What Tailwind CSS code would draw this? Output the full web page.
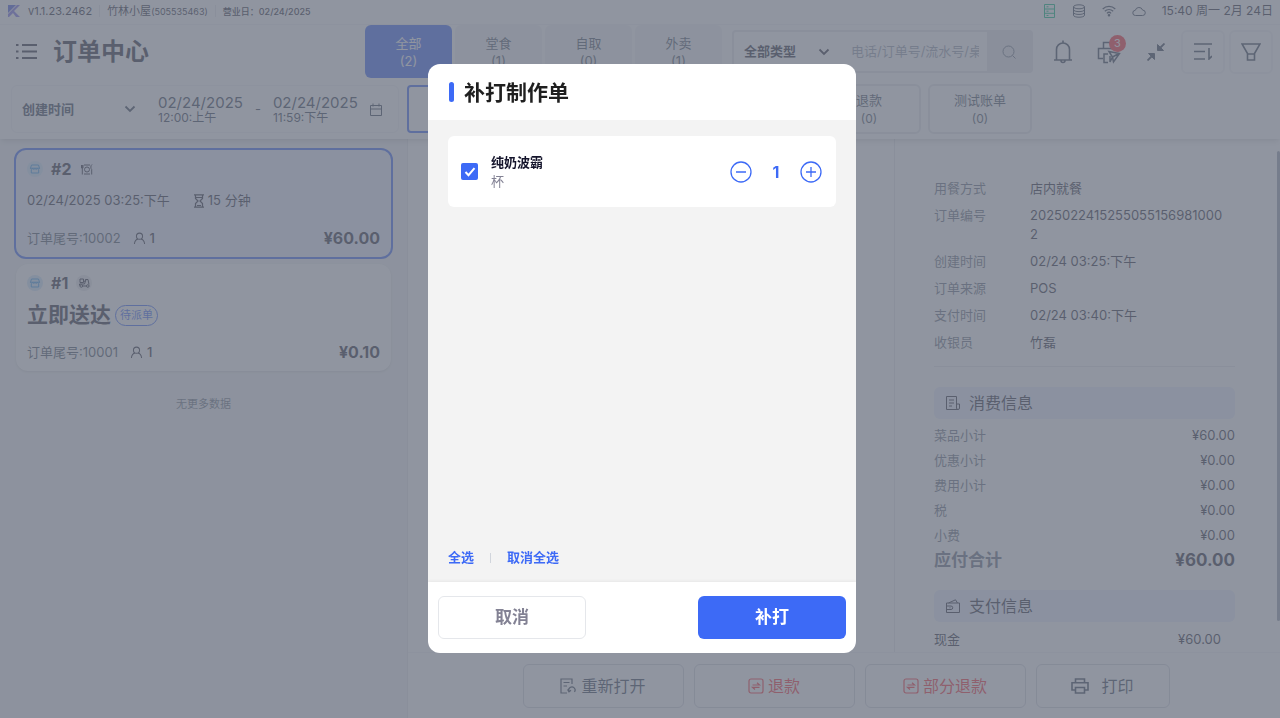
<!DOCTYPE html>
<html lang="zh-CN">

<head>
    <meta charset="UTF-8">
    <meta name="viewport" content="width=device-width, initial-scale=1.0">
    <title>订单中心</title>
    <script src="https://cdn.jsdelivr.net/npm/@tailwindcss/browser@4"></script>
</head>

<body class="h-screen overflow-hidden bg-white text-[#2b2b3a] text-[13px] leading-[19px] font-['Inter','Noto_Sans_CJK_SC',sans-serif]">
    <!-- Shared icons -->
    <svg class="hidden">
        <symbol id="chevron" viewBox="0 0 12 12"><path d="M1.5 3.5 6 8l4.500-4.500" fill="none" stroke="currentColor" stroke-width="1.800"/></symbol>
        <symbol id="shop" viewBox="0 0 16 16"><circle cx="8" cy="8" r="8" fill="#cfe6fa"/><path d="M4.500 4h7l1 3.200H3.500zM3.500 7.200c0 1.500 2.200 1.500 2.200 0 0 1.500 2.300 1.500 2.300 0 0 1.500 2.300 1.500 2.300 0 0 1.500 2.200 1.500 2.200 0M4.300 8.800V12h7.400V8.800" fill="none" stroke="#3b9bea"/></symbol>
        <symbol id="person" viewBox="0 0 14 14"><g fill="none" stroke="currentColor" stroke-width="1.100"><circle cx="7" cy="4.500" r="3.300"/><path d="M1.500 13c.3-3 2-5 4-5.400M12.500 13c-.3-3-2-5-4-5.400"/></g></symbol>
        <symbol id="refund" viewBox="0 0 16 16"><g fill="none" stroke="currentColor" stroke-width="1.200"><rect x="1" y="1" width="14" height="14" rx="2"/><path d="M4.500 7h7L9 4.800M11.500 9.300h-7L7 11.500"/></g></symbol>
    </svg>

    <div class="h-full flex flex-col">
        <!-- Status bar -->
        <div class="h-6 shrink-0 flex items-center pl-2 pr-[7px] pb-[2px] text-[11px]">
            <svg class="w-3 h-3 mr-2" viewBox="0 0 12 12"><path d="M0 0h8L0 8z" fill="#4a5be0"/><path d="M0 12V9l9-9h3L6 6l6 6H8L5 8l-4 4z" fill="#7a6fe8"/></svg>
            <span>v1.1.23.2462</span>
            <span class="w-px h-3 bg-gray-200 mx-[7px]"></span>
            <span>竹林小屋<span class="text-[9px]">(505535463)</span></span>
            <span class="w-px h-3 bg-gray-200 mx-[7px]"></span>
            <span class="text-[9px] font-medium">营业日：02/24/2025</span>
            <div class="ml-auto flex items-center gap-4 text-gray-700">
                <svg class="w-[13px] h-[14px] text-emerald-500" viewBox="0 0 13 14" fill="none" stroke="currentColor"><path d="M1.500.5h10v13h-10zM1.500 5h10M1.500 9.300h10M3.500 2.800h2M3.500 7.200h2M3.500 11.500h2"/></svg>
                <svg class="w-[14px] h-[14px]" viewBox="0 0 14 14" fill="none" stroke="currentColor"><ellipse cx="7" cy="2.800" rx="5.500" ry="2"/><path d="M1.500 2.800v8.400c0 2.700 11 2.700 11 0V2.800M1.500 5.600c0 2.700 11 2.700 11 0M1.500 8.400c0 2.700 11 2.700 11 0"/></svg>
                <svg class="w-[14px] h-[12px]" viewBox="0 0 14 12" fill="none" stroke="currentColor" stroke-width="1.200"><path d="M.7 4c3.600-3.500 9-3.500 12.600 0M2.800 6.200c2.400-2.300 6-2.300 8.400 0M4.900 8.300c1.200-1.200 3-1.200 4.200 0"/><circle cx="7" cy="10.300" r=".7" fill="currentColor"/></svg>
                <svg class="w-[14px] h-[11px]" viewBox="0 0 14 11" fill="none" stroke="currentColor"><path d="M3.500 9.500a2.600 2.600 0 0 1-.2-5.200 3.800 3.800 0 0 1 7.300-.2 2.700 2.700 0 0 1 0 5.400z"/></svg>
                <span class="text-xs text-[#2b2b3a]">15:40 周一 2月 24日</span>
            </div>
        </div>

        <header class="shrink-0 relative border-t border-gray-100 shadow-md pb-[5px]">
            <!-- Title and order type tabs -->
            <div class="flex items-center h-[53px] pl-4 pr-[7px]">
                <svg class="w-[21px] h-[17px] mr-4" viewBox="0 0 21 17" fill="none" stroke="currentColor" stroke-width="2"><path d="M6 2h15M6 8.500h15M6 15h15M0 2h2.500M0 8.500h2.500M0 15h2.500"/></svg>
                <h1 class="text-2xl font-bold">订单中心</h1>
                <div class="ml-auto flex gap-[3px] self-stretch leading-[18px] text-gray-600">
                    <button class="w-[87px] rounded-md bg-[#3d6af6] text-white">全部<br>(2)</button>
                    <button class="w-[87px] rounded-md bg-gray-100">堂食<br>(1)</button>
                    <button class="w-[87px] rounded-md bg-gray-100">自取<br>(0)</button>
                    <button class="w-[87px] rounded-md bg-gray-100">外卖<br>(1)</button>
                </div>
                <div class="ml-[10px] flex h-[43px] w-[301px] border-2 border-gray-200 rounded-sm">
                    <label class="grid items-center w-[108px] shrink-0">
                        <select aria-label="订单类型" class="col-start-1 row-start-1 appearance-none pl-[10px] font-bold h-full">
                            <option>全部类型</option>
                        </select>
                        <svg class="col-start-1 row-start-1 justify-self-end mr-3 w-3 h-3 pointer-events-none"><use href="#chevron"/></svg>
                    </label>
                    <input type="text" aria-label="搜索订单" placeholder="电话/订单号/流水号/桌号" class="w-[128px] ml-[9px] min-w-0 placeholder:text-gray-400">
                    <button aria-label="搜索" class="ml-auto w-11 shrink-0 bg-gray-200 text-gray-500 flex items-center justify-center">
                        <svg class="w-[14px] h-[14px]" viewBox="0 0 14 14" fill="none" stroke="currentColor"><circle cx="6.500" cy="6.500" r="5.500"/><path d="m10.500 10.500 3 3"/></svg>
                    </button>
                </div>
                <div class="flex items-center text-gray-700">
                    <button aria-label="通知" class="ml-5">
                        <svg class="w-5 h-6" viewBox="0 0 20 24" fill="none" stroke="currentColor" stroke-width="1.600"><path d="M3.500 20V9.500a6.500 6.500 0 0 1 13 0V20M1 20h18M10 3V.5M8 20.500a2 2 0 0 0 4 0"/></svg>
                    </button>
                    <button aria-label="打印任务" class="relative ml-6">
                        <svg class="w-6 h-6" viewBox="0 0 24 24" fill="none" stroke="currentColor" stroke-width="1.500"><path d="M6.500 8V2.500h11V8M6 18.500H1.500V8.500h20v3M11 22.500H7V14h4M12 11.500l10.500 2-6 8.500-1-5zM15.500 17l6.500-3.500M15.500 17l-2.500 5v-6"/></svg>
                        <span class="absolute -top-[5px] left-3 w-[17px] h-[17px] rounded-full bg-red-500 text-white text-[11px] leading-[17px]">3</span>
                    </button>
                    <button aria-label="退出全屏" class="ml-[26px]">
                        <svg class="w-[18px] h-[18px]" viewBox="0 0 18 18" fill="none" stroke="currentColor" stroke-width="1.800"><path d="m17.500.5-5 5M.5 17.500l5-5"/><path d="M10.500 1.500v6h6zM1.500 10.500h6v6z" fill="currentColor" stroke-width="1"/></svg>
                    </button>
                    <button aria-label="排序" class="ml-4 w-11 h-11 border-2 border-gray-100 rounded-md flex items-center justify-center">
                        <svg class="w-[18px] h-[17px]" viewBox="0 0 18 17" fill="none" stroke="currentColor" stroke-width="1.600"><path d="M0 1h18M0 8.500h11M0 16h11M15 5v11l3-3"/></svg>
                    </button>
                    <button aria-label="筛选" class="ml-1 w-11 h-11 border-2 border-gray-100 rounded-md flex items-center justify-center">
                        <svg class="w-5 h-[18px]" viewBox="0 0 20 18" fill="none" stroke="currentColor" stroke-width="1.600"><path d="M1 1h18l-5.500 9.500V17h-7v-6.500zM6.500 11h7"/></svg>
                    </button>
                </div>
            </div>

            <!-- Date range and order status -->
            <div class="flex items-center mt-[6px] pl-[11px] pr-[248px]">
                <div class="flex items-center w-[388px] h-12 pr-4 border border-gray-100 rounded-md text-gray-700">
                    <label class="grid items-center w-[124px]">
                        <select aria-label="时间类型" class="col-start-1 row-start-1 appearance-none pl-[10px] font-bold">
                            <option>创建时间</option>
                        </select>
                        <svg class="col-start-1 row-start-1 justify-self-end w-3 h-3 pointer-events-none"><use href="#chevron"/></svg>
                    </label>
                    <button class="ml-[22px] text-left text-xs leading-[14px]"><span class="block text-[15px] leading-[17px]">02/24/2025</span>12:00:上午</button>
                    <span class="ml-3">-</span>
                    <button class="ml-3 text-left text-xs leading-[14px]"><span class="block text-[15px] leading-[17px]">02/24/2025</span>11:59:下午</button>
                    <svg class="ml-auto w-3 h-[13px]" viewBox="0 0 12 13" fill="none" stroke="currentColor"><path d="M.5 2.500h11v10H.5zM.5 6h11M3 .5v3M9 .5v3"/></svg>
                </div>
                <button aria-label="全部状态" class="ml-2 w-[70px] h-12 border-2 border-[#3d6af6] rounded-sm"></button>
                <button class="ml-auto w-[104px] h-[50px] border-2 border-gray-200 rounded-md leading-[18px] text-gray-600">退款<br><span class="text-xs">(0)</span></button>
                <button class="ml-[7px] w-[104px] h-[50px] border-2 border-gray-200 rounded-md leading-[18px] text-gray-600">测试账单<br><span class="text-xs">(0)</span></button>
            </div>
        </header>

        <div class="flex-1 min-h-0 flex">
            <!-- Order list -->
            <aside class="w-[408px] shrink-0 bg-gray-100 border-r border-gray-200 px-[14px] pt-[9px]">
                <article class="border-2 border-[#3d6af6] rounded-xl bg-[#e9eeff] pl-[11px] pr-[11px] pt-[9px] pb-[9px]">
                    <div class="flex items-center">
                        <svg class="w-4 h-4"><use href="#shop"/></svg>
                        <strong class="ml-2 text-base leading-5">#2</strong>
                        <svg class="ml-[10px] w-3 h-[11px]" viewBox="0 0 12 11" fill="none" stroke="currentColor"><circle cx="6" cy="5.500" r="2.500"/><path d="M.5 1v3h1.500V1M1.300 1v9.500M11 .5c-1.500 1-1.500 4-.3 5v5M3 1h6M3 10h6"/></svg>
                    </div>
                    <div class="flex items-center mt-3">
                        <span>02/24/2025 03:25:下午</span>
                        <svg class="ml-6 mr-1 w-[10px] h-[14px]" viewBox="0 0 10 14" fill="none" stroke="currentColor" stroke-width="1.200"><path d="M0 .8h10M0 13.200h10M1.500 1v3.500L4 7 1.500 9.500V13M8.500 1v3.500L6 7l2.500 2.500V13M2 3.500h6M3 11.500h4"/></svg>
                        <span>15 分钟</span>
                    </div>
                    <div class="flex items-center mt-[18px]">
                        <span class="text-gray-600">订单尾号:10002</span>
                        <svg class="ml-3 mr-1 w-[13px] h-[13px]"><use href="#person"/></svg>
                        <span class="font-medium">1</span>
                        <strong class="ml-auto text-base leading-5">¥60.00</strong>
                    </div>
                </article>
                <article class="mt-[5px] mx-[2px] rounded-xl bg-white shadow-sm pl-[11px] pr-[11px] pt-[9px] pb-[9px]">
                    <div class="flex items-center">
                        <svg class="w-4 h-4"><use href="#shop"/></svg>
                        <strong class="ml-2 text-base leading-5">#1</strong>
                        <span class="ml-2 w-4 h-4 rounded-full bg-gray-200 flex items-center justify-center">
                            <svg class="w-[11px] h-[10px]" viewBox="0 0 11 10" fill="none" stroke="currentColor"><path d="M1 1h3.500v3.500H1zM.5 7.500V6h5l1.500-4.500H9l1 5M3.500 8h4M7 1l-1.500 3"/><circle cx="2.300" cy="8" r="1.300"/><circle cx="8.800" cy="8" r="1.300"/></svg>
                        </span>
                    </div>
                    <div class="flex items-center mt-2 leading-7">
                        <strong class="text-[21px]">立即送达</strong>
                        <span class="ml-1 px-1 border border-[#3d6af6] rounded-full text-[#3d6af6] text-[11px] leading-[19px]">待派单</span>
                    </div>
                    <div class="flex items-center mt-[13px]">
                        <span class="text-gray-600">订单尾号:10001</span>
                        <svg class="ml-3 mr-1 w-[13px] h-[13px]"><use href="#person"/></svg>
                        <span class="font-medium">1</span>
                        <strong class="ml-auto text-base leading-5">¥0.10</strong>
                    </div>
                </article>
                <p class="mt-6 text-center text-[11px] text-gray-500">无更多数据</p>
            </aside>

            <div class="flex-1 min-w-0 flex flex-col">
                <div class="flex-1 min-h-0 flex">
                    <main class="flex-1"></main>
                    <!-- Order details -->
                    <section class="w-[386px] shrink-0 border-l border-gray-200 flex overflow-hidden">
                        <div class="flex-1 min-w-0 pl-[39px] pr-[42px] pt-10">
                            <dl class="grid grid-cols-[96px_1fr] gap-y-2 pr-2 pb-[14px]">
                                <dt class="text-gray-500">用餐方式</dt><dd>店内就餐</dd>
                                <dt class="text-gray-500">订单编号</dt><dd class="break-all">20250224152550551569810002</dd>
                                <dt class="text-gray-500">创建时间</dt><dd>02/24 03:25:下午</dd>
                                <dt class="text-gray-500">订单来源</dt><dd>POS</dd>
                                <dt class="text-gray-500">支付时间</dt><dd>02/24 03:40:下午</dd>
                                <dt class="text-gray-500">收银员</dt><dd>竹磊</dd>
                            </dl>
                            <hr class="border-gray-200">
                            <h2 class="mt-5 h-8 rounded-md bg-[#e9eeff] flex items-center pl-3 text-base">
                                <svg class="w-[14px] h-[14px] mr-[9px]" viewBox="0 0 14 14" fill="none" stroke="currentColor"><path d="M10.500 8V.5H.5v13h11.500a1.500 1.500 0 0 0 1.500-1.500V8h-3v4a1.500 1.500 0 0 0 1.500 1.500M3 4h5M3 7h5M3 10h3"/></svg>
                                消费信息
                            </h2>
                            <dl class="grid grid-cols-2 gap-y-[6px] mt-[7px]">
                                <dt class="text-gray-500">菜品小计</dt><dd class="text-right">¥60.00</dd>
                                <dt class="text-gray-500">优惠小计</dt><dd class="text-right">¥0.00</dd>
                                <dt class="text-gray-500">费用小计</dt><dd class="text-right">¥0.00</dd>
                                <dt class="text-gray-500">税</dt><dd class="text-right">¥0.00</dd>
                                <dt class="text-gray-500">小费</dt><dd class="text-right">¥0.00</dd>
                                <dt class="text-[17px] font-bold text-gray-500">应付合计</dt><dd class="text-right text-[17px] font-bold">¥60.00</dd>
                            </dl>
                            <h2 class="mt-5 h-8 rounded-md bg-[#e9eeff] flex items-center pl-3 text-base">
                                <svg class="w-[14px] h-[14px] mr-[9px]" viewBox="0 0 14 14" fill="none" stroke="currentColor"><path d="M.5 4h13v9.500H.5zM2.500 4 9.500.8l2 3.200M.5 7H5a1.500 1.500 0 0 1 0 3.500H.5M3.500 8.800h1"/></svg>
                                支付信息
                            </h2>
                            <div class="flex justify-between mt-2 pr-[14px]"><span>现金</span><span>¥60.00</span></div>
                        </div>
                        <div class="w-[3px] h-[470px] mt-3 rounded-full bg-gray-400"></div>
                    </section>
                </div>
                <!-- Order actions -->
                <footer class="shrink-0 flex justify-center gap-[10px] border-t border-gray-100 pl-1 pt-[11px] pb-[10px] text-base text-gray-700">
                    <button class="w-[161px] h-11 border border-gray-300 rounded-md flex items-center justify-center gap-1">
                        <svg class="w-[17px] h-4" viewBox="0 0 17 16" fill="none" stroke="currentColor" stroke-width="1.200"><path d="M7 15H1V1h11v5M3.500 4.500h6M3.500 8h3.500M9 13.500a3.200 3.200 0 1 1 5.500.5M7.500 11.500 9 13.800l2-1.500"/></svg>
                        重新打开
                    </button>
                    <button class="w-[161px] h-11 border border-gray-300 rounded-md flex items-center justify-center gap-1 text-red-500">
                        <svg class="w-4 h-4"><use href="#refund"/></svg>
                        退款
                    </button>
                    <button class="w-[161px] h-11 border border-gray-300 rounded-md flex items-center justify-center gap-1 text-red-500">
                        <svg class="w-4 h-4"><use href="#refund"/></svg>
                        部分退款
                    </button>
                    <button class="w-[134px] h-11 border border-gray-300 rounded-md flex items-center justify-center gap-3">
                        <svg class="w-[18px] h-4" viewBox="0 0 18 16" fill="none" stroke="currentColor" stroke-width="1.600"><path d="M4.500 4.500V1h9v3.500M4.500 12H1V4.800h16V12h-3.500M4.500 9.500h9V15h-9z"/></svg>
                        打印
                    </button>
                </footer>
            </div>
        </div>
    </div>

    <!-- Reprint dialog -->
    <div class="fixed inset-0 bg-[#6b7280]/75 flex items-center justify-center pl-1 pb-px">
        <div role="dialog" aria-labelledby="dialogTitle" class="w-[428px] h-[589px] max-h-full rounded-xl bg-white flex flex-col overflow-hidden">
            <div class="h-14 shrink-0 flex items-center pl-[21px]">
                <span class="w-[5px] h-5 rounded-sm bg-[#3d6af6] mr-[10px]"></span>
                <h2 id="dialogTitle" class="text-[21px] font-bold text-[#1f1f1f]">补打制作单</h2>
            </div>
            <div class="flex-1 bg-[#f3f3f3] flex flex-col px-5 pt-4 pb-[15px]">
                <div class="h-[71px] rounded-md bg-white flex items-center pl-[13px] pr-[14px]">
                    <span class="grid place-items-center mr-[13px]">
                        <input type="checkbox" id="item1" checked class="col-start-1 row-start-1 appearance-none w-[17px] h-[17px] rounded-xs bg-[#3d6af6]">
                        <svg class="col-start-1 row-start-1 w-3 h-3 pointer-events-none" viewBox="0 0 12 12" fill="none" stroke="#fff" stroke-width="2"><path d="m1.500 6 3 3.200 6-7"/></svg>
                    </span>
                    <label for="item1"><span class="block font-bold text-[#14142b]">纯奶波霸</span><span class="block text-[#838294]">杯</span></label>
                    <div class="ml-auto flex items-center text-[#3d6af6]">
                        <button aria-label="减少">
                            <svg class="w-[22px] h-[22px]" viewBox="0 0 22 22" fill="none" stroke="currentColor" stroke-width="1.300"><circle cx="11" cy="11" r="10"/><path d="M6 11h10"/></svg>
                        </button>
                        <span class="w-12 text-center text-base font-bold">1</span>
                        <button aria-label="增加">
                            <svg class="w-[22px] h-[22px]" viewBox="0 0 22 22" fill="none" stroke="currentColor" stroke-width="1.300"><circle cx="11" cy="11" r="10"/><path d="M6 11h10M11 6v10"/></svg>
                        </button>
                    </div>
                </div>
                <div class="mt-auto flex items-center gap-4 font-bold text-[#3d6af6]">
                    <button>全选</button>
                    <span class="w-px h-[10px] bg-gray-300"></span>
                    <button>取消全选</button>
                </div>
            </div>
            <div class="shrink-0 flex justify-between px-[10px] pt-[14px] pb-[14px] shadow-[0_-1px_3px_rgba(0,0,0,0.05)] text-[17px] font-bold">
                <button class="w-[148px] h-[43px] rounded-md border border-gray-200 text-[#838294]">取消</button>
                <button class="w-[148px] h-[43px] rounded-md bg-[#3d6af6] text-white">补打</button>
            </div>
        </div>
    </div>
</body>

</html>
